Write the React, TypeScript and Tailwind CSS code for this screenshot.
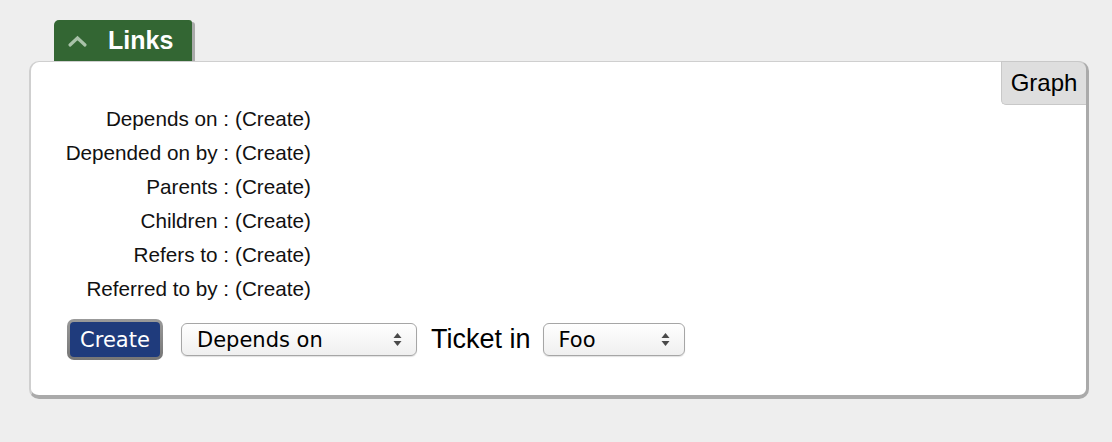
import React from "react";

const rows = [
  "Depends on :",
  "Depended on by :",
  "Parents :",
  "Children :",
  "Refers to :",
  "Referred to by :",
];

function Arrows() {
  return (
    <svg width="9" height="15" viewBox="0 0 9 15" className="shrink-0">
      <path d="M4.5 1 L8.5 6 L0.5 6 Z" fill="#4a4a4a" />
      <path d="M0.5 9 L8.5 9 L4.5 14 Z" fill="#4a4a4a" />
    </svg>
  );
}

function FakeSelect({ value, width }: { value: string; width: string }) {
  return (
    <div
      className={`${width} h-[33px] flex items-center justify-between pl-[15px] pr-[14px] rounded-[6px] border border-[#a6a6a6] bg-gradient-to-b from-white to-[#efefef] shadow-[0_1px_1px_rgba(0,0,0,0.12)] font-['DejaVu_Sans',sans-serif] text-[21px] text-black`}
    >
      <span className="pt-[2px]">{value}</span>
      <Arrows />
    </div>
  );
}

export default function App() {
  return (
    <div className="min-h-[442px] w-[1112px] bg-[#eeeeee] pl-[29px] pt-[20px] font-['Liberation_Sans',Arial,sans-serif]">
      {/* Tab */}
      <div className="ml-[25px] w-[138px] h-[41px] rounded-tl-[5px] rounded-tr-[3px] bg-[#336633] shadow-[3px_2px_0_#aaaaaa] flex items-center pl-[13px] gap-[20px]">
        <svg width="21" height="14" viewBox="0 0 21 14">
          <path
            d="M3 11 L10.5 4 L18 11"
            fill="none"
            stroke="#a9c2a9"
            strokeWidth="3.2"
            strokeLinecap="round"
          />
        </svg>
        <span className="text-white font-bold text-[25px] leading-none">Links</span>
      </div>

      {/* Panel */}
      <div className="relative w-[1060px] h-[338px] bg-white rounded-[10px] border-t border-l-2 border-r-[3px] border-b-[4px] border-t-[#cfcfcf] border-l-[#cfcfcf] border-r-[#aaaaaa] border-b-[#aaaaaa]">
        <div className="absolute -top-px right-0 w-[85px] h-[44px] rounded-tr-[8px] rounded-bl-[5px] bg-[#dedede] border-l border-b border-t border-[#c8c8c8] flex items-center justify-center text-[24px] text-black">
          Graph
        </div>

        <div className="pt-[40px] flex flex-col">
          {rows.map((label) => (
            <div key={label} className="flex h-[34px] items-center text-[20.7px] text-[#111]">
              <div className="w-[198px] text-right">{label}</div>
              <div className="ml-[6px]">(Create)</div>
            </div>
          ))}
        </div>

        <div className="mt-[13px] pl-[36px] flex items-center">
          <div className="h-[41px] w-[96px] rounded-[7px] bg-gradient-to-b from-[#9a9a9a] to-[#767676] p-[3px]">
            <div className="h-full w-full pt-[2px] rounded-[4px] bg-[#1f3b7c] flex items-center justify-center font-['DejaVu_Sans',sans-serif] text-[21px] text-white">
              Create
            </div>
          </div>
          <div className="ml-[18px]">
            <FakeSelect value="Depends on" width="w-[236px]" />
          </div>
          <span className="ml-[14px] text-[27px] text-black">Ticket in</span>
          <div className="ml-[12px]">
            <FakeSelect value="Foo" width="w-[142px]" />
          </div>
        </div>
      </div>
    </div>
  );
}
